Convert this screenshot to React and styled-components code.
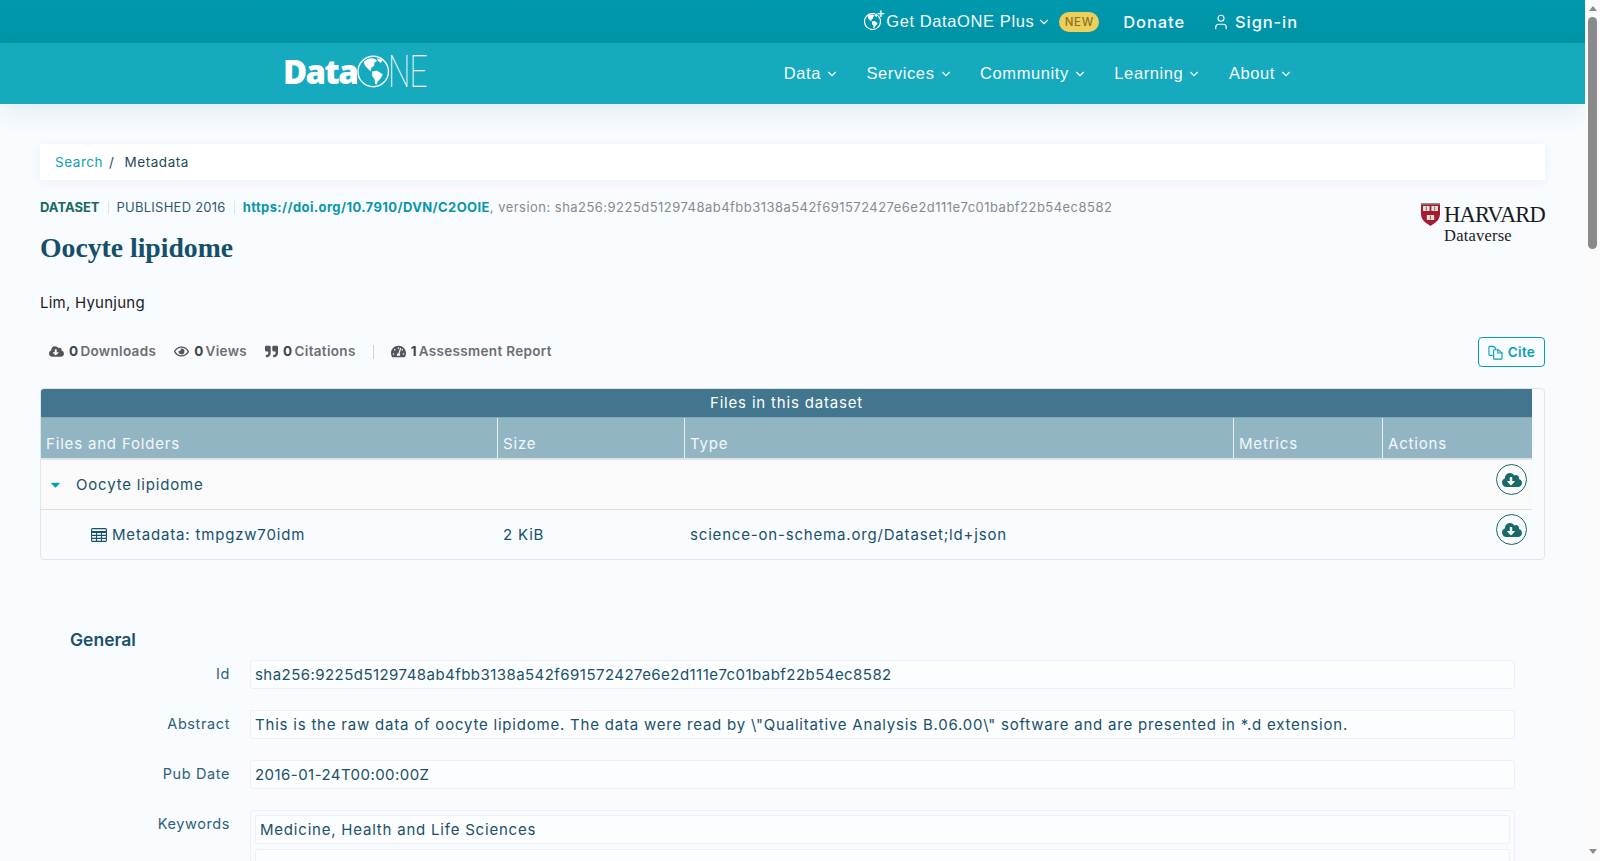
import React from 'react';
import styled, { createGlobalStyle } from 'styled-components';
import { ChevronDown, User } from 'lucide-react';
import { FaCloudDownloadAlt, FaRegEye, FaQuoteRight, FaTachometerAlt, FaCaretDown } from 'react-icons/fa';

const Global = createGlobalStyle`
  html, body { overflow: hidden; height: 861px; }
  body { margin: 0; background: #f8fbff; font-family: Inter, "Open Sans", sans-serif; color: #1a5168; }
`;

const Page = styled.div`
  width: 1585px;
`;

const ScrollTrack = styled.div`
  position: fixed;
  top: 0;
  right: 0;
  bottom: 0;
  width: 15px;
  background: #fafafa;
  display: flex;
  flex-direction: column;
  align-items: center;
  padding: 6px 0 7px;
  box-sizing: border-box;
`;

const ScrollArrow = styled.i`
  width: 0;
  height: 0;
  border-left: 4.5px solid transparent;
  border-right: 4.5px solid transparent;
  ${p => (p.$up ? 'border-bottom: 5px solid #8a8a8a;' : 'border-top: 5px solid #8a8a8a;')}
`;

const ScrollThumb = styled.div`
  width: 9px;
  height: 232px;
  margin-top: 6px;
  margin-bottom: auto;
  background: #8a8a8a;
  border-radius: 5px;
`;

const TopBar = styled.div`
  height: 43px;
  background: linear-gradient(#0099ae, #0094a8);
  display: flex;
  align-items: center;
  justify-content: flex-end;
  padding-right: 287px;
  color: #f3fbfc;
`;

const PlusLink = styled.a`
  display: flex;
  align-items: center;
  font: 16.5px "Liberation Sans", Arial, sans-serif;
  letter-spacing: 0.6px;
  svg.chev { margin-left: 3px; }
`;

const GlobeWrap = styled.span`
  position: relative;
  display: inline-flex;
  margin-right: 5px;
  &::after {
    content: '+';
    position: absolute;
    top: -7px;
    right: -4px;
    font-size: 13px;
    font-weight: bold;
  }
`;

const NewBadge = styled.span`
  width: 40px;
  height: 20px;
  border-radius: 10px;
  background: #edcf5e;
  color: #8a7420;
  font: 500 11.5px Inter, sans-serif;
  letter-spacing: 0.6px;
  display: flex;
  align-items: center;
  justify-content: center;
  margin-left: 8px;
`;

const TopLink = styled.a`
  display: flex;
  align-items: center;
  gap: 5px;
  font: 500 16.5px Inter, sans-serif;
  letter-spacing: 0.9px;
  margin-left: ${p => p.$gap}px;
`;

const NavBar = styled.div`
  height: 61px;
  background: #16aabf;
  box-shadow: 0 4px 28px rgba(22, 90, 120, 0.12);
  display: flex;
  align-items: center;
  padding-left: 283px;
  padding-right: 292px;
`;

const Logo = styled.div`
  display: flex;
  align-items: center;
  color: #fff;
  height: 36px;
  width: 160px;
  margin-top: -5px;
`;

const LogoData = styled.span`
  font: 800 33px "Open Sans", sans-serif;
  letter-spacing: -1.6px;
`;

const LogoNe = styled.span`
  display: inline-block;
  font: 100 45px Roboto, sans-serif;
  letter-spacing: -1px;
  margin-left: -2px;
  transform: scaleX(0.7);
  transform-origin: left center;
`;

const NavList = styled.nav`
  margin-left: auto;
  display: flex;
  gap: 27.5px;
`;

const NavItem = styled.a`
  display: flex;
  align-items: center;
  gap: 4px;
  color: #f3fbfc;
  font: 16.5px "Liberation Sans", Arial, sans-serif;
  letter-spacing: 0.6px;
`;

const Main = styled.main`
  padding: 40px 40px 0;
`;

const Crumbs = styled.div`
  height: 36px;
  background: #fff;
  box-shadow: 0 2px 12px rgba(30, 80, 110, 0.06);
  display: flex;
  align-items: center;
  padding-left: 15px;
  font-size: 13.5px;
  letter-spacing: 0.55px;
  color: #1f4a5c;
  a { color: #0f9fb2; margin-right: 6px; }
  span { margin-left: 10px; }
`;

const Head = styled.div`
  display: flex;
  justify-content: space-between;
  align-items: flex-start;
`;

const MetaLine = styled.div`
  margin-top: 19px;
  height: 16px;
  display: flex;
  align-items: center;
  font-size: 13px;
  letter-spacing: 0.4px;
  white-space: nowrap;
  color: #2f5a6c;
`;

const Kind = styled.b`
  color: #17695f;
  font-weight: 700;
  letter-spacing: 0;
`;

const Published = styled.span`
  letter-spacing: 0.25px;
`;

const Sep = styled.i`
  width: 1px;
  height: 13px;
  background: #dde5ea;
  margin: 0 8px;
`;

const Doi = styled.a`
  color: #0a96a8;
  font-weight: 700;
`;

const Version = styled.span`
  color: #8a8a8a;
  letter-spacing: 0.47px;
`;

const Title = styled.h1`
  margin: 17px 0 0;
  font: 700 27.7px "Liberation Serif", serif;
  color: #164f68;
`;

const Author = styled.div`
  margin-top: 29px;
  font-size: 15px;
  letter-spacing: 0.24px;
  color: #222;
`;

const Harvard = styled.div`
  margin-top: 23px;
  display: grid;
  grid-template-columns: 19px auto;
  column-gap: 4px;
  font-family: "Liberation Serif", serif;
  color: #1c1c1c;
  line-height: 1;
`;

const HarvardName = styled.div`
  font-size: 22.5px;
  letter-spacing: -0.8px;
  padding-top: 1px;
`;

const HarvardSub = styled.div`
  grid-column: 2;
  font-size: 16.5px;
  letter-spacing: 0.2px;
  margin-top: 1px;
`;

const StatsRow = styled.div`
  margin-top: 25px;
  height: 30px;
  display: flex;
  align-items: center;
  padding-left: 9px;
  font-size: 13.5px;
  letter-spacing: 0.32px;
  font-weight: 600;
  color: #6e6e6e;
`;

const Stat = styled.span`
  display: flex;
  align-items: center;
  margin-right: 18px;
  padding-bottom: 2px;
  svg { margin-right: 5px; color: #555; }
  b { color: #444; font-weight: 700; margin-right: 2px; }
`;

const StatSep = styled.i`
  width: 1px;
  height: 14px;
  background: #cfcfcf;
  margin: 0 17px 0 -1px;
`;

const CiteBtn = styled.button`
  margin-left: auto;
  width: 67px;
  height: 30px;
  background: transparent;
  border: 1px solid #0a9db0;
  border-radius: 4px;
  color: #0a9db0;
  font: 600 13.5px Inter, sans-serif;
  letter-spacing: 0.3px;
  display: flex;
  align-items: center;
  justify-content: center;
  gap: 5px;
  padding: 0;
`;

const FileBox = styled.section`
  margin-top: 21px;
  height: 170px;
  border: 1px solid #e3e6e8;
  border-radius: 4px;
  padding-right: 12px;
  overflow: hidden;
  letter-spacing: 0.82px;
`;

const FileTitle = styled.div`
  height: 27px;
  padding-bottom: 1px;
  background: #41768e;
  color: #fff;
  font-size: 15px;
  display: flex;
  align-items: center;
  justify-content: center;
`;

const Columns = `
  display: grid;
  grid-template-columns: 456px 187px 549px 149px 150px;
`;

const HeadRow = styled.div`
  ${Columns}
  height: 40px;
  background: #92b5c4;
  border-bottom: 2px solid #e2e2e2;
  border-top: 1px solid #85a8b8;
`;

const HeadCell = styled.div`
  color: #f4f8fa;
  font-size: 15px;
  padding: 16px 0 0 5px;
  line-height: 20px;
  & + & { border-left: 1px solid #e4edf1; }
`;

const Row = styled.div`
  ${Columns}
  height: ${p => p.$h}px;
  background: ${p => p.$bg};
  border-bottom: ${p => (p.$line ? '1px solid #dedede' : '0')};
  font-size: 15px;
  color: #1a5168;
`;

const Cell = styled.div`
  display: flex;
  align-items: center;
  padding-left: ${p => p.$pad || 6}px;
`;

const ActionCell = styled.div`
  display: flex;
  justify-content: flex-end;
  padding: 4px 5px 0 0;
`;

const RoundBtn = styled.button`
  width: 31px;
  height: 31px;
  border-radius: 50%;
  border: 1px solid #176a66;
  background: transparent;
  color: #176a66;
  padding: 0;
  display: flex;
  align-items: center;
  justify-content: center;
`;

const CaretIcon = styled(FaCaretDown)`
  margin-right: 13px;
  color: #0a9db0;
`;

const GeneralBlock = styled.section`
  margin-top: 68px;
  padding: 0 30px;
`;

const GeneralTitle = styled.h2`
  margin: 0;
  font-size: 17.5px;
  line-height: 24px;
  font-weight: 600;
  color: #1a5168;
`;

const Field = styled.div`
  display: grid;
  grid-template-columns: 160px 1fr;
  column-gap: 20px;
  margin-top: ${p => (p.$first ? 8 : 21)}px;
`;

const FieldLabel = styled.div`
  text-align: right;
  font-size: 14.5px;
  letter-spacing: 0.6px;
  line-height: 27px;
  color: #2f6076;
`;

const ValueBox = styled.div`
  height: 29px;
  box-sizing: border-box;
  border: 1px solid #eef0f3;
  border-radius: 3px;
  background: #fcfdff;
  padding: ${p => (p.$low ? 5 : 0)}px 0 0 4px;
  display: flex;
  align-items: center;
  font-size: 15px;
  letter-spacing: ${p => (p.$tight ? 0.45 : 0.79)}px;
  color: #1a5168;
  white-space: nowrap;
`;

const ListBox = styled.div`
  border: 1px solid #eef0f3;
  border-radius: 3px;
  padding: 4px;
  display: flex;
  flex-direction: column;
  gap: 5px;
`;

const CopyIcon = () => (
  <svg width="15" height="15" viewBox="0 0 16 16" fill="none" stroke="currentColor" strokeWidth="1.2">
    <path d="M5 11 H2 A1 1 0 0 1 1 10 V2.5 A1 1 0 0 1 2 1.5 H6 L8 3.5 V5" />
    <path d="M6 6 A1 1 0 0 1 7 5 H11 L15 8.5 V14 A1 1 0 0 1 14 15 H7 A1 1 0 0 1 6 14 Z" />
    <path d="M10.5 5 V8.5 H15" />
  </svg>
);

const TableIcon = () => (
  <svg width="16" height="14" viewBox="0 0 16 14" fill="none" stroke="currentColor" strokeWidth="1.1" style={{ marginRight: 5 }}>
    <rect x="0.6" y="0.6" width="14.8" height="12.8" rx="1" />
    <path d="M0.6 4 H15.4" strokeWidth="2" />
    <path d="M0.6 7.4 H15.4 M0.6 10.4 H15.4 M5.5 4 V13 M10.5 4 V13" />
  </svg>
);

const Shield = () => (
  <svg width="19" height="23" viewBox="0 0 19 23">
    <path d="M0 0 H19 V11 C19 17 14 20 9.5 23 C5 20 0 17 0 11 Z" fill="#a51c30" />
    <path d="M0 0 H19 V1.6 H0 Z" fill="#8f8f8f" />
    <rect x="2" y="3" width="6.6" height="5" fill="#e9dfd6" />
    <rect x="10.4" y="3" width="6.6" height="5" fill="#e9dfd6" />
    <rect x="5.8" y="12" width="7.4" height="5" fill="#e9dfd6" />
    <path d="M5.3 3.5 V7.5 M13.7 3.5 V7.5 M9.5 12.5 V16.5" stroke="#555" strokeWidth="0.8" />
  </svg>
);

const Globe = ({ size, ring }) => (
  <svg width={size} height={size} viewBox="0 0 34 34">
    <circle cx="17" cy="17" r="16" fill="none" stroke="#fff" strokeWidth={ring} />
    <path d="M7 7 C10 3 16 2 19 4 L21 6 L18 8 L18 11 L15 13 L14.5 17 L11.5 14 L8.5 11 Z" fill="#fff" />
    <path d="M16 17 L21 16 L24 18 L27 20 L25 24 L22 27 L20.5 31 L19 30 L18.5 25 L16 22 Z" fill="#fff" />
    <path d="M21 3 L27 5 L25 8 L22 6 Z" fill="#fff" />
  </svg>
);

const App = () => (
  <Page>
    <Global />
    <TopBar>
      <PlusLink>
        <GlobeWrap><Globe size={17} ring={2.4} /></GlobeWrap>
        Get DataONE Plus
        <ChevronDown className="chev" size={14} />
      </PlusLink>
      <NewBadge>NEW</NewBadge>
      <TopLink $gap={24}>Donate</TopLink>
      <TopLink $gap={27}><User size={18} strokeWidth={1.6} />Sign-in</TopLink>
    </TopBar>
    <NavBar>
      <Logo>
        <LogoData>Data</LogoData>
        <Globe size={33} ring={1.4} />
        <LogoNe>NE</LogoNe>
      </Logo>
      <NavList>
        {['Data', 'Services', 'Community', 'Learning', 'About'].map(n => (
          <NavItem key={n}>{n}<ChevronDown size={14} /></NavItem>
        ))}
      </NavList>
    </NavBar>
    <Main>
      <Crumbs><a>Search</a>/<span>Metadata</span></Crumbs>
      <Head>
        <div>
          <MetaLine>
            <Kind>DATASET</Kind><Sep /><Published>PUBLISHED 2016</Published><Sep />
            <Doi>https://doi.org/10.7910/DVN/C2OOIE</Doi>
            <Version>, version: sha256:9225d5129748ab4fbb3138a542f691572427e6e2d111e7c01babf22b54ec8582</Version>
          </MetaLine>
          <Title>Oocyte lipidome</Title>
          <Author>Lim, Hyunjung</Author>
        </div>
        <Harvard>
          <Shield />
          <HarvardName>HARVARD</HarvardName>
          <HarvardSub>Dataverse</HarvardSub>
        </Harvard>
      </Head>
      <StatsRow>
        <Stat><FaCloudDownloadAlt size={15} /><b>0</b>Downloads</Stat>
        <Stat><FaRegEye size={15} /><b>0</b>Views</Stat>
        <Stat><FaQuoteRight size={13} /><b>0</b>Citations</Stat>
        <StatSep />
        <Stat><FaTachometerAlt size={15} /><b>1</b>Assessment Report</Stat>
        <CiteBtn><CopyIcon />Cite</CiteBtn>
      </StatsRow>
      <FileBox>
        <FileTitle>Files in this dataset</FileTitle>
        <HeadRow>
          <HeadCell>Files and Folders</HeadCell>
          <HeadCell>Size</HeadCell>
          <HeadCell>Type</HeadCell>
          <HeadCell>Metrics</HeadCell>
          <HeadCell>Actions</HeadCell>
        </HeadRow>
        <Row $h={49} $bg="#fafafa" $line>
          <Cell $pad={7}><CaretIcon size={15} />Oocyte lipidome</Cell>
          <Cell /><Cell /><Cell />
          <ActionCell><RoundBtn><FaCloudDownloadAlt size={20} /></RoundBtn></ActionCell>
        </Row>
        <Row $h={49} $bg="transparent">
          <Cell $pad={50}><TableIcon />Metadata: tmpgzw70idm</Cell>
          <Cell>2 KiB</Cell>
          <Cell>science-on-schema.org/Dataset;ld+json</Cell>
          <Cell />
          <ActionCell><RoundBtn><FaCloudDownloadAlt size={20} /></RoundBtn></ActionCell>
        </Row>
      </FileBox>
      <GeneralBlock>
        <GeneralTitle>General</GeneralTitle>
        <Field $first>
          <FieldLabel>Id</FieldLabel>
          <ValueBox $tight>sha256:9225d5129748ab4fbb3138a542f691572427e6e2d111e7c01babf22b54ec8582</ValueBox>
        </Field>
        <Field>
          <FieldLabel>Abstract</FieldLabel>
          <ValueBox>This is the raw data of oocyte lipidome. The data were read by \"Qualitative Analysis B.06.00\" software and are presented in *.d extension.</ValueBox>
        </Field>
        <Field>
          <FieldLabel>Pub Date</FieldLabel>
          <ValueBox $tight>2016-01-24T00:00:00Z</ValueBox>
        </Field>
        <Field>
          <FieldLabel>Keywords</FieldLabel>
          <ListBox>
            <ValueBox>Medicine, Health and Life Sciences</ValueBox>
            <ValueBox $low>oocyte</ValueBox>
          </ListBox>
        </Field>
      </GeneralBlock>
    </Main>
    <ScrollTrack>
      <ScrollArrow $up />
      <ScrollThumb />
      <ScrollArrow />
    </ScrollTrack>
  </Page>
);

export default App;
